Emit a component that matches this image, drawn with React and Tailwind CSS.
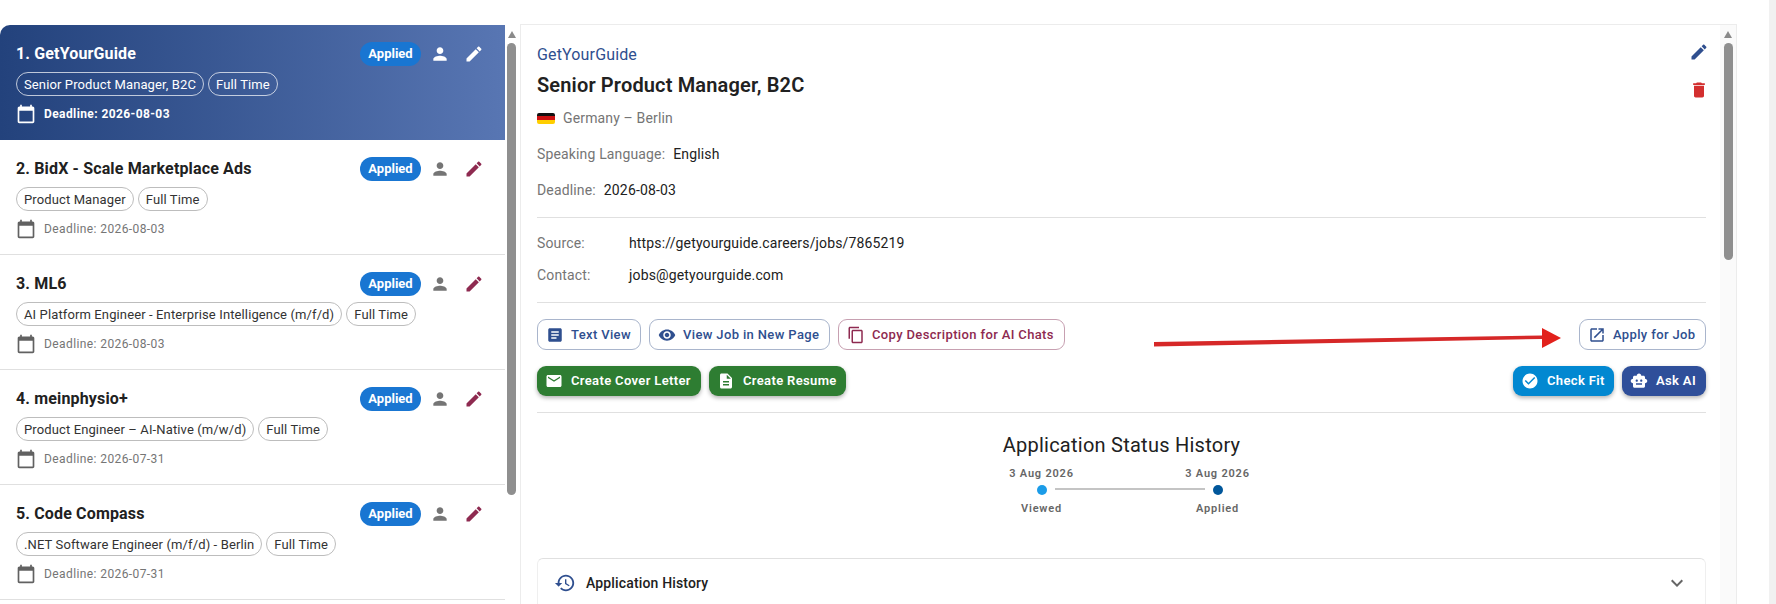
const P = {
  person: "M12 12c2.21 0 4-1.79 4-4s-1.79-4-4-4-4 1.79-4 4 1.79 4 4 4zm0 2c-2.67 0-8 1.34-8 4v2h16v-2c0-2.66-5.33-4-8-4z",
  edit: "M3 17.25V21h3.75L17.81 9.94l-3.75-3.75L3 17.25zM20.71 7.04c.39-.39.39-1.02 0-1.41l-2.34-2.34c-.39-.39-1.02-.39-1.41 0l-1.83 1.83 3.75 3.75 1.83-1.83z",
  calendar: "M20 3h-1V1h-2v2H7V1H5v2H4c-1.1 0-2 .9-2 2v16c0 1.1.9 2 2 2h16c1.1 0 2-.9 2-2V5c0-1.1-.9-2-2-2zm0 18H4V8h16v13z",
  del: "M6 19c0 1.1.9 2 2 2h8c1.1 0 2-.9 2-2V7H6v12zM19 4h-3.5l-1-1h-5l-1 1H5v2h14V4z",
  article: "M19 3H5c-1.1 0-2 .9-2 2v14c0 1.1.9 2 2 2h14c1.1 0 2-.9 2-2V5c0-1.1-.9-2-2-2zm-5 14H7v-2h7v2zm3-4H7v-2h10v2zm0-4H7V7h10v2z",
  eye: "M12 4.5C7 4.5 2.73 7.61 1 12c1.73 4.39 6 7.5 11 7.5s9.27-3.11 11-7.5c-1.73-4.39-6-7.5-11-7.5zM12 17c-2.76 0-5-2.24-5-5s2.24-5 5-5 5 2.24 5 5-2.24 5-5 5zm0-8c-1.66 0-3 1.34-3 3s1.34 3 3 3 3-1.34 3-3-1.34-3-3-3z",
  copy: "M16 1H4c-1.1 0-2 .9-2 2v14h2V3h12V1zm3 4H8c-1.1 0-2 .9-2 2v14c0 1.1.9 2 2 2h11c1.1 0 2-.9 2-2V7c0-1.1-.9-2-2-2zm0 16H8V7h11v14z",
  email: "M20 4H4c-1.1 0-1.99.9-1.99 2L2 18c0 1.1.9 2 2 2h16c1.1 0 2-.9 2-2V6c0-1.1-.9-2-2-2zm0 4l-8 5-8-5V6l8 5 8-5v2z",
  desc: "M14 2H6c-1.1 0-1.99.9-1.99 2L4 20c0 1.1.89 2 1.99 2H18c1.1 0 2-.9 2-2V8l-6-6zm2 16H8v-2h8v2zm0-4H8v-2h8v2zm-3-5V3.5L18.5 9H13z",
  open: "M19 19H5V5h7V3H5c-1.11 0-2 .9-2 2v14c0 1.1.89 2 2 2h14c1.1 0 2-.9 2-2v-7h-2v7zM14 3v2h3.59l-9.83 9.83 1.41 1.41L19 6.41V10h2V3h-7z",
  check: "M12 2C6.48 2 2 6.48 2 12s4.48 10 10 10 10-4.48 10-10S17.52 2 12 2zm-2 15l-5-5 1.41-1.41L10 14.17l7.59-7.59L19 8l-9 9z",
  robot: "M20 9V7c0-1.1-.9-2-2-2h-3c0-1.66-1.34-3-3-3S9 3.34 9 5H6c-1.1 0-2 .9-2 2v2c-1.66 0-3 1.34-3 3s1.34 3 3 3v4c0 1.1.9 2 2 2h12c1.1 0 2-.9 2-2v-4c1.66 0 3-1.34 3-3s-1.34-3-3-3zM7.5 11.5c0-.83.67-1.5 1.5-1.5s1.5.67 1.5 1.5S9.83 13 9 13s-1.5-.67-1.5-1.5zM16 17H8v-2h8v2zm-1-4c-.83 0-1.5-.67-1.5-1.5S14.17 10 15 10s1.5.67 1.5 1.5S15.83 13 15 13z",
  history: "M13 3c-4.97 0-9 4.03-9 9H1l3.89 3.89.07.14L9 12H6c0-3.87 3.13-7 7-7s7 3.13 7 7-3.13 7-7 7c-1.93 0-3.68-.79-4.94-2.06l-1.42 1.42C8.27 19.99 10.51 21 13 21c4.97 0 9-4.03 9-9s-4.03-9-9-9zm-1 5v5l4.28 2.54.72-1.21-3.5-2.08V8H12z",
  chevron: "M16.59 8.59L12 13.17 7.41 8.59 6 10l6 6 6-6z",
};

function Icon({ d, className }) {
  return (
    <svg viewBox="0 0 24 24" className={className} fill="currentColor" aria-hidden="true">
      <path d={d} />
    </svg>
  );
}

const jobs = [
  { n: "1. GetYourGuide", role: "Senior Product Manager, B2C", date: "2026-08-03", selected: true },
  { n: "2. BidX - Scale Marketplace Ads", role: "Product Manager", date: "2026-08-03" },
  { n: "3. ML6", role: "AI Platform Engineer - Enterprise Intelligence (m/f/d)", date: "2026-08-03" },
  { n: "4. meinphysio+", role: "Product Engineer – AI-Native (m/w/d)", date: "2026-07-31" },
  { n: "5. Code Compass", role: ".NET Software Engineer (m/f/d) - Berlin", date: "2026-07-31" },
];

function Chip({ children, selected }) {
  return (
    <span className={`h-6 flex items-center px-[7px] rounded-full border text-[13px] tracking-[0.12px] leading-none whitespace-nowrap ${selected ? "border-white/70 text-white" : "border-[#bdbdbd] text-[#333333]"}`}>
      {children}
    </span>
  );
}

function JobRow({ job }) {
  const s = job.selected;
  return (
    <div className={`h-[115px] pl-4 pr-4 pt-[17px] shrink-0 ${s ? "bg-gradient-to-r from-[#23427c] to-[#5876b3] rounded-tl-[10px]" : "border-b border-[#e0e0e0]"}`}>
      <div className="flex items-center h-6">
        <div className={`flex-1 text-base font-bold tracking-[0.15px] ${s ? "text-white" : "text-[#212121]"}`}>{job.n}</div>
        <span className="h-6 w-[61px] flex items-center justify-center rounded-full text-[13px] font-bold text-white bg-[#1976d2]">Applied</span>
        <div className="w-[38px] flex justify-center">
          <Icon d={P.person} className={`w-5 h-5 ${s ? "text-white" : "text-[#757575]"}`} />
        </div>
        <div className="w-[30px] flex justify-center">
          <Icon d={P.edit} className={`w-5 h-5 ${s ? "text-white" : "text-[#8e2a50]"}`} />
        </div>
      </div>
      <div className="flex gap-1 mt-[6px]">
        <Chip selected={s}>{job.role}</Chip>
        <Chip selected={s}>Full Time</Chip>
      </div>
      <div className="flex items-center mt-2 h-5">
        <Icon d={P.calendar} className={`w-5 h-5 shrink-0 ${s ? "text-white" : "text-[#616161]"}`} />
        <span className={`ml-2 text-xs tracking-[0.4px] ${s ? "text-white font-bold" : "text-[#757575]"}`}>Deadline: {job.date}</span>
      </div>
    </div>
  );
}

function Track({ thumb }) {
  return (
    <div className={`flex flex-col items-center shrink-0 ${thumb}`}>
      <div className="h-[5px] mt-[6px] w-0 border-x-[4.5px] border-x-transparent border-b-[7px] border-b-[#8a8a8a]" />
      <div className="w-[9px] rounded-full bg-[#8f8f8f] mt-[5px] flex-1" />
    </div>
  );
}

function OutlineBtn({ icon, label, tone, className }) {
  const c = tone === "red" ? "text-[#8e2a50] border-[#c7a0b1]" : "text-[#2f4f8f] border-[#a9b5cc]";
  return (
    <button className={`h-[31px] rounded-[9px] border flex items-center text-[13px] font-medium tracking-[0.36px] whitespace-nowrap ${c} ${className}`}>
      <Icon d={icon} className="w-[18px] h-[18px] shrink-0" />
      <span>{label}</span>
    </button>
  );
}

function FillBtn({ icon, label, bg, className }) {
  return (
    <button className={`h-[30px] rounded-[9px] flex items-center text-white text-[13px] font-semibold tracking-[0.35px] whitespace-nowrap shadow-[0_2px_4px_rgba(0,0,0,0.3)] ${bg} ${className}`}>
      <Icon d={icon} className="w-[18px] h-[18px] shrink-0" />
      <span>{label}</span>
    </button>
  );
}

function Step({ date, label, dot }) {
  return (
    <div className="flex flex-col items-center w-[26px]">
      <span className="text-[11px] leading-4 font-semibold tracking-[0.8px] text-[#666666] whitespace-nowrap">{date}</span>
      <span className={`w-[10px] h-[10px] rounded-full mt-[3px] shrink-0 ${dot}`} />
      <span className="text-[11px] leading-4 font-semibold tracking-[0.8px] text-[#666666] mt-[6px]">{label}</span>
    </div>
  );
}

export default function App() {
  return (
    <div className="relative w-[1776px] h-[604px] overflow-hidden bg-white flex font-['Roboto',sans-serif]">
      <div className="flex-1 flex pt-[25px] h-[604px]">
        <div className="w-[505px] shrink-0 flex flex-col overflow-hidden">
          {jobs.map((j) => (
            <JobRow key={j.n} job={j} />
          ))}
        </div>
        <div className="w-[15px] shrink-0 flex flex-col items-center pr-[2px]">
          <Track thumb="h-[470px]" />
        </div>
        <div className="flex-1 border-l border-t border-r border-[#ececec] flex -mt-px">
          <main className="flex-1 min-w-0 pl-4 pr-[14px]">
            <div className="flex justify-between">
              <div className="pt-[18px]">
                <div className="text-base leading-6 tracking-[0.15px] text-[#2f4f8f]">GetYourGuide</div>
                <div className="text-xl leading-7 font-semibold tracking-[0.15px] text-[#212121] mt-1">Senior Product Manager, B2C</div>
                <div className="flex items-center mt-[9px] h-5">
                  <span className="w-[18px] h-[11px] rounded-[2px] overflow-hidden flex flex-col">
                    <span className="flex-1 bg-[#111111]" />
                    <span className="flex-1 bg-[#cc1111]" />
                    <span className="flex-1 bg-[#ffce00]" />
                  </span>
                  <span className="ml-2 text-sm tracking-[0.15px] text-[#757575]">Germany – Berlin</span>
                </div>
                <div className="text-sm tracking-[0.15px] mt-4 h-5 leading-5">
                  <span className="text-[#757575]">Speaking Language:</span>
                  <span className="ml-2 text-[#212121]">English</span>
                </div>
                <div className="text-sm tracking-[0.15px] mt-4 h-5 leading-5">
                  <span className="text-[#757575]">Deadline:</span>
                  <span className="ml-2 text-[#212121]">2026-08-03</span>
                </div>
              </div>
              <div className="flex flex-col items-center pt-[17px] mr-[-3px]">
                <Icon d={P.edit} className="w-5 h-5 text-[#2f4f8f]" />
                <Icon d={P.del} className="w-5 h-5 text-[#d32f2f] mt-[18px]" />
              </div>
            </div>
            <div className="border-t border-[#e0e0e0] mt-[17px] pt-[15px]">
              <div className="flex text-sm leading-5 tracking-[0.15px]">
                <span className="w-[92px] text-[#757575]">Source:</span>
                <span className="text-[#212121]">https://getyourguide.careers/jobs/7865219</span>
              </div>
              <div className="flex text-sm leading-5 tracking-[0.15px] mt-3">
                <span className="w-[92px] text-[#757575]">Contact:</span>
                <span className="text-[#212121]">jobs@getyourguide.com</span>
              </div>
            </div>
            <div className="border-t border-[#e0e0e0] mt-[17px] pt-4">
              <div className="flex gap-2">
                <OutlineBtn icon={P.article} label="Text View" className="w-[104px] pl-2 gap-[7px]" />
                <OutlineBtn icon={P.eye} label="View Job in New Page" className="w-[181px] pl-2 gap-[7px]" />
                <OutlineBtn icon={P.copy} label="Copy Description for AI Chats" tone="red" className="w-[227px] pl-2 gap-[7px]" />
                <OutlineBtn icon={P.open} label="Apply for Job" className="w-[127px] pl-2 gap-[7px] ml-auto" />
              </div>
              <div className="flex gap-2 mt-[16px]">
                <FillBtn icon={P.email} label="Create Cover Letter" bg="bg-[#2e7d32]" className="w-[164px] pl-2 gap-2" />
                <FillBtn icon={P.desc} label="Create Resume" bg="bg-[#2e7d32]" className="w-[137px] pl-2 gap-2" />
                <FillBtn icon={P.check} label="Check Fit" bg="bg-[#0288d1]" className="w-[101px] pl-2 gap-2 ml-auto" />
                <FillBtn icon={P.robot} label="Ask AI" bg="bg-[#2f4f9a]" className="w-[84px] pl-2 gap-2" />
              </div>
            </div>
            <div className="border-t border-[#e0e0e0] mt-[16px] pt-[18px]">
              <div className="text-xl leading-7 tracking-[0.25px] text-center text-[#212121]">Application Status History</div>
              <div className="flex justify-center ml-[16px] mt-[7px]">
                <Step date="3 Aug 2026" label="Viewed" dot="bg-[#1b9ce8]" />
                <div className="w-[150px] h-[2px] bg-[#c4c4c4] mt-[22px]" />
                <Step date="3 Aug 2026" label="Applied" dot="bg-[#01579b]" />
              </div>
            </div>
            <div className="mt-[41px] border-t border-x border-t-[#e0e0e0] border-x-[#efefef] rounded-t-[6px] h-[60px] pl-4 pr-4">
              <div className="h-12 flex items-center">
                <Icon d={P.history} className="w-[22px] h-[22px] text-[#2f4f8f]" />
                <span className="ml-[10px] text-sm font-medium tracking-[0.15px] text-[#212121]">Application History</span>
                <Icon d={P.chevron} className="w-6 h-6 text-[#666666] ml-auto" />
              </div>
            </div>
          </main>
          <div className="w-[16px] shrink-0 flex flex-col items-center bg-[#fafafa]">
            <Track thumb="h-[235px]" />
          </div>
        </div>
        <div className="w-[32px] shrink-0" />
      </div>
      <div className="w-[7px] shrink-0 bg-[#f1f1f1]" />
      <svg className="absolute left-[1154px] top-[326px] w-[410px] h-[24px] pointer-events-none" viewBox="0 0 410 24">
        <polygon points="0,16 388,9.5 388,13 0,20.5" fill="#d62828" />
        <polygon points="388,2 407,12 388,22" fill="#e2211c" />
      </svg>
    </div>
  );
}
